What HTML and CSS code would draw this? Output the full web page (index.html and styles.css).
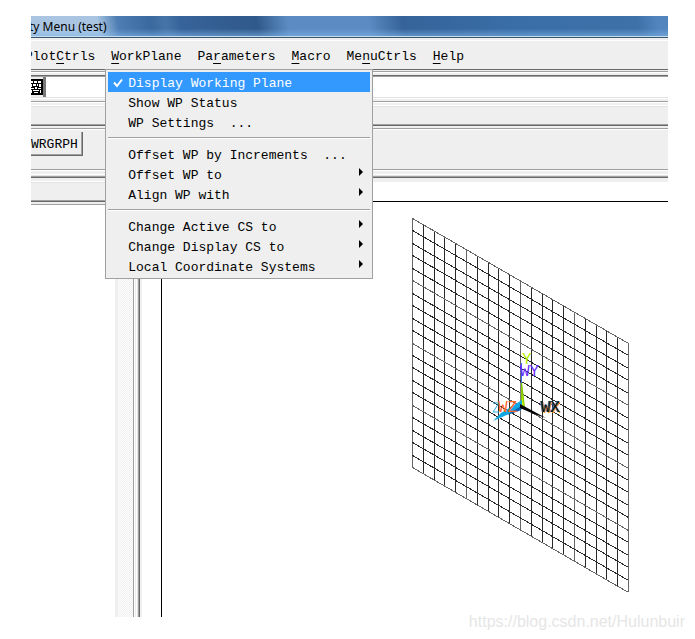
FILE: index.html
```
<!DOCTYPE html>
<html lang="en">
<head>
<meta charset="utf-8">
<title>Utility Menu (test)</title>
<link rel="stylesheet" href="styles.css">
</head>
<body>
<main class="window">
  <header class="titlebar"><span class="title">ty Menu (test)</span></header>
  <nav class="menubar" aria-label="Utility menu">
    <div class="menu first"><button type="button" class="menu-btn">Plot<u>C</u>trls</button></div>
    <div class="menu">
      <button type="button" class="menu-btn" aria-expanded="true"><u>W</u>orkPlane</button>
      <div class="dropdown" role="menu">
        <button type="button" class="item active" role="menuitemcheckbox" aria-checked="true"><svg class="check" viewBox="0 0 10 10" aria-hidden="true"><path d="M1 4.5 4 8 9 1.5"/></svg>Display Working Plane</button>
        <button type="button" class="item" role="menuitem">Show WP Status</button>
        <button type="button" class="item" role="menuitem">WP Settings&nbsp; ...</button>
        <hr class="sep">
        <button type="button" class="item" role="menuitem">Offset WP by Increments&nbsp; ...</button>
        <button type="button" class="item sub" role="menuitem">Offset WP to</button>
        <button type="button" class="item sub" role="menuitem">Align WP with</button>
        <hr class="sep">
        <button type="button" class="item sub" role="menuitem">Change Active CS to</button>
        <button type="button" class="item sub" role="menuitem">Change Display CS to</button>
        <button type="button" class="item sub" role="menuitem">Local Coordinate Systems</button>
      </div>
    </div>
    <div class="menu"><button type="button" class="menu-btn">Pa<u>r</u>ameters</button></div>
    <div class="menu"><button type="button" class="menu-btn"><u>M</u>acro</button></div>
    <div class="menu"><button type="button" class="menu-btn">Me<u>n</u>uCtrls</button></div>
    <div class="menu"><button type="button" class="menu-btn"><u>H</u>elp</button></div>
  </nav>
  <div class="groove groove-a"></div>
  <div class="command">
    <button type="button" class="kbd" aria-label="Keyboard">
      <svg viewBox="0 0 12 18" aria-hidden="true" shape-rendering="crispEdges">
        <path fill="#000" d="M0 1h12v16H0z"/>
        <path fill="#fff" d="M0 3h2v2H0zM3 3h3v2H3zM7 3h3v2H7zM0 6h1v3H0zM2 6h3v2H2zM6 6h1v2H6zM8 6h2v3H8zM0 10h3v1H0zM4 9h2v2H4zM7 10h3v1H7zM0 12h1v3H0zM2 12h6v1H2zM3 14h4v1H3zM9 12h1v3H9z"/>
      </svg>
    </button>
    <input class="cmd-input" type="text" aria-label="Command">
  </div>
  <div class="groove groove-b"></div>
  <div class="strip"></div>
  <div class="groove groove-c"></div>
  <div class="toolbar"><button type="button" class="tool">WRGRPH</button></div>
  <div class="groove groove-d"></div>
  <div class="body">
    <aside class="side">
      <div class="side-head"></div>
      <div class="side-main">
        <div class="track"></div>
      </div>
    </aside>
    <section class="graphics">
      <div class="viewport">
        <svg class="plane" viewBox="0 0 220 380" role="img" aria-label="Working plane grid">
          <g id="grid" fill="none" shape-rendering="crispEdges"></g>
          <path fill="#808080" d="M108 165h2v24h-2z"/>
          <path fill="#84c800" d="M109 164h1l3 25-4 2z"/>
          <path fill="#c8f000" d="M110 176l2 12-2 1z"/>
          <path fill="none" stroke="#3c6cff" d="M109.500 145v20"/>
          <path fill="#10a8e0" d="M110 182v8l-29 13 8-8z"/>
          <path fill="#1060b0" d="M109 188l-14 9 12-4 3-2z"/>
          <path fill="#000" d="M108 186l26 14-12-4-14-6z"/>
          <path fill="none" stroke="#28a8e8" d="M81 185h6l-6 9h6"/>
          <path fill="none" stroke="#101018" d="M138 185l10 9M148 185l-10 9"/>
          <g class="axis">
            <text x="110" y="146" fill="#b4f000">Y</text>
            <text x="108" y="158" fill="#6a2cff">WY</text>
            <text x="86" y="194" fill="#ff6428">WZ</text>
            <text class="wx" x="129" y="194" fill="#101018">WX</text>
          </g>
        </svg>
      </div>
    </section>
  </div>
</main>
<footer class="source">https://blog.csdn.net/Hulunbuir</footer>
<script src="grid.js"></script>
</body>
</html>
```
FILE: grid.js
```
// Draws the 20 x 20 sheared grid; every fifth line is a lighter major line.
const grid = document.getElementById("grid");
const W = 216, H = 249, SHEAR = 125, N = 20;
function line(x1, y1, x2, y2, major) {
  const el = document.createElementNS("http://www.w3.org/2000/svg", "path");
  el.setAttribute("d", `M${x1} ${y1}L${x2} ${y2}`);
  el.setAttribute("class", major ? "major" : "minor");
  grid.appendChild(el);
}
for (let i = 0; i <= N; i++) {
  const x = Math.round(i * W / N) + 0.5;
  const top = Math.round(i * SHEAR / N);
  line(x, top, x, top + H, i % 5 === 0);
}
for (let j = 0; j <= N; j++) {
  const y = Math.round(j * H / N) + 0.5;
  line(0.5, y, W + 0.5, y + SHEAR, j % 5 === 0);
}
```
FILE: styles.css
```
* { box-sizing: border-box; }

body {
  margin: 0;
  min-height: 100vh;
  padding: 16px 27px 0 31px;
  display: flex;
  flex-direction: column;
  background: #fff;
  color: #000;
  font: 13px/20px "Liberation Mono", monospace;
}

button {
  font: inherit;
  color: inherit;
  border: 0;
  padding: 0;
  margin: 0;
  background: none;
}

.window {
  flex: 1;
  display: flex;
  flex-direction: column;
  overflow: hidden;
}

.titlebar {
  height: 22px;
  overflow: hidden;
  border-bottom: 1px solid #3c5670;
  box-shadow: inset 0 -1px #c4dcec;
  background:
    linear-gradient(to bottom, rgba(255,255,255,0) 60%, rgba(130,185,235,.6)),
    linear-gradient(80deg, #a9c5e2 0, #a9c5e2 68px, #4d7db3 88px, #3a699f 120px, #4774a8 135px, #36639a 150px, #30598b 225px, #5b8bc2 255px, #5b8bc2 335px, #35639a 368px, #3a6ea6 480px, #3e71a8 600px, #5285bd 620px);
}

.title {
  display: block;
  margin-left: -2px;
  font: 12px/22px "Noto Sans", sans-serif;
  white-space: nowrap;
}

.menubar {
  display: flex;
  height: 31px;
  padding-top: 3px;
  background: linear-gradient(#efefef 2px, #fff 2px, #fff 3px, #efefef 3px);
}

.menu { position: relative; }
.menu.first { margin-left: -14px; }

.menu-btn {
  height: 28px;
  padding: 2px 8px 0;
  line-height: 28px;
  white-space: nowrap;
}

u {
  text-decoration: underline;
  text-underline-offset: 3px;
}

.dropdown {
  position: absolute;
  z-index: 2;
  top: 100%;
  left: 2px;
  width: 268px;
  padding: 2px;
  border: 1px solid #a0a0a0;
  background: #efefef;
}

.item {
  display: block;
  position: relative;
  width: 262px;
  height: 20px;
  padding-left: 20px;
  line-height: 24px;
  text-align: left;
  white-space: nowrap;
}

.item.active {
  background: #3399ff;
  color: #fff;
}

.check {
  position: absolute;
  left: 5px;
  top: 6px;
  width: 10px;
  height: 10px;
  fill: none;
  stroke: #fff;
  stroke-width: 2;
}

.item.sub::after {
  content: "";
  position: absolute;
  right: 7px;
  top: 4px;
  border: 4px solid transparent;
  border-left-color: #000;
  border-right: 0;
}

.sep {
  height: 2px;
  margin: 5px 0;
  border: 0;
  border-top: 1px solid #a0a0a0;
  background: #fff;
}

.groove { flex: none; }

.groove-a {
  height: 8px;
  background: linear-gradient(#696969 1px, #efefef 1px, #efefef 2px, #a0a0a0 2px, #a0a0a0 3px, #fff 3px, #fff 4px, #efefef 4px, #efefef 6px, #696969 6px, #696969 7px, #a0a0a0 7px);
}

.groove-b {
  height: 10px;
  background: linear-gradient(#e3e3e3 1px, #fff 1px, #fff 2px, #efefef 2px, #efefef 4px, #a0a0a0 4px, #a0a0a0 5px, #fff 5px, #fff 6px, #efefef 6px, #efefef 8px, #fff 8px, #fff 9px, #e3e3e3 9px);
}

.groove-c {
  height: 6px;
  background: linear-gradient(#a0a0a0 1px, #696969 1px, #696969 2px, #efefef 2px, #efefef 4px, #a0a0a0 4px, #a0a0a0 5px, #fff 5px);
}

.groove-d {
  height: 9px;
  background: linear-gradient(#a0a0a0 1px, #fff 1px, #fff 2px, #efefef 2px, #efefef 5px, #fff 5px, #fff 6px, #e3e3e3 6px, #e3e3e3 7px, #a0a0a0 7px, #a0a0a0 8px, #696969 8px);
}

.command {
  display: flex;
  height: 20px;
}

.kbd {
  width: 12px;
  height: 20px;
  background: #efefef;
}

.kbd svg {
  display: block;
  width: 12px;
  height: 18px;
}

.cmd-input {
  flex: 1;
  min-width: 0;
  border: 0;
  border-left: 3px solid #787878;
  padding: 0 4px;
  background: #fff;
  font: inherit;
  outline: 0;
}

.strip {
  height: 17px;
  background: #efefef;
}

.toolbar {
  height: 39px;
  padding-top: 2px;
  background: #efefef;
}

.tool {
  height: 24px;
  padding: 2px 4px 0 0;
  border-right: 1px solid #696969;
  border-bottom: 1px solid #696969;
  box-shadow: inset -1px -1px #a0a0a0;
}

.body {
  flex: 1;
  display: flex;
}

.side {
  width: 109px;
  display: flex;
  flex-direction: column;
}

.side-head {
  height: 27px;
  background: linear-gradient(#efefef 3px, #fff 3px, #fff 4px, #e3e3e3 4px, #e3e3e3 5px, #efefef 5px, #efefef 22px, #a0a0a0 22px, #a0a0a0 23px, #696969 23px, #696969 24px, #efefef 24px, #efefef 26px, #a0a0a0 26px);
}

.side-main {
  flex: 1;
  display: flex;
  justify-content: flex-end;
  background: linear-gradient(to left, #696969 1px, #a0a0a0 1px, #a0a0a0 2px, #e3e3e3 2px, #e3e3e3 3px, #fff 3px, #fff 4px, #efefef 4px, #efefef 5px, #fff 5px, #fff 6px, #a0a0a0 6px, #a0a0a0 7px, #fff 7px);
}

.track {
  width: 18px;
  margin-right: 7px;
  border-left: 3px solid #efefef;
  background: repeating-conic-gradient(#fff 0 25%, #efefef 0 50%) 0 0 / 2px 2px;
}

.graphics {
  flex: 1;
  display: flex;
  padding: 19px 0 0 19px;
  border-top: 4px solid #efefef;
  border-left: 2px solid #efefef;
}

.viewport {
  flex: 1;
  border-top: 1px solid #000;
  border-left: 1px solid #000;
  padding: 16px 36px 0 0;
  display: flex;
  justify-content: flex-end;
}

.plane {
  display: block;
  width: 220px;
  height: 380px;
}

.major { stroke: #666; }
.minor { stroke: #2a2a2a; }

.axis {
  font: 16px "Liberation Mono", monospace;
}

.wx { text-shadow: 1px 1px #ff9a30, -1px 0 #1478c8; }

.source {
  height: 22px;
  margin-right: -17px;
  text-align: right;
  color: #e6e6e6;
  font: 16px/10px "Liberation Sans", sans-serif;
}
```
